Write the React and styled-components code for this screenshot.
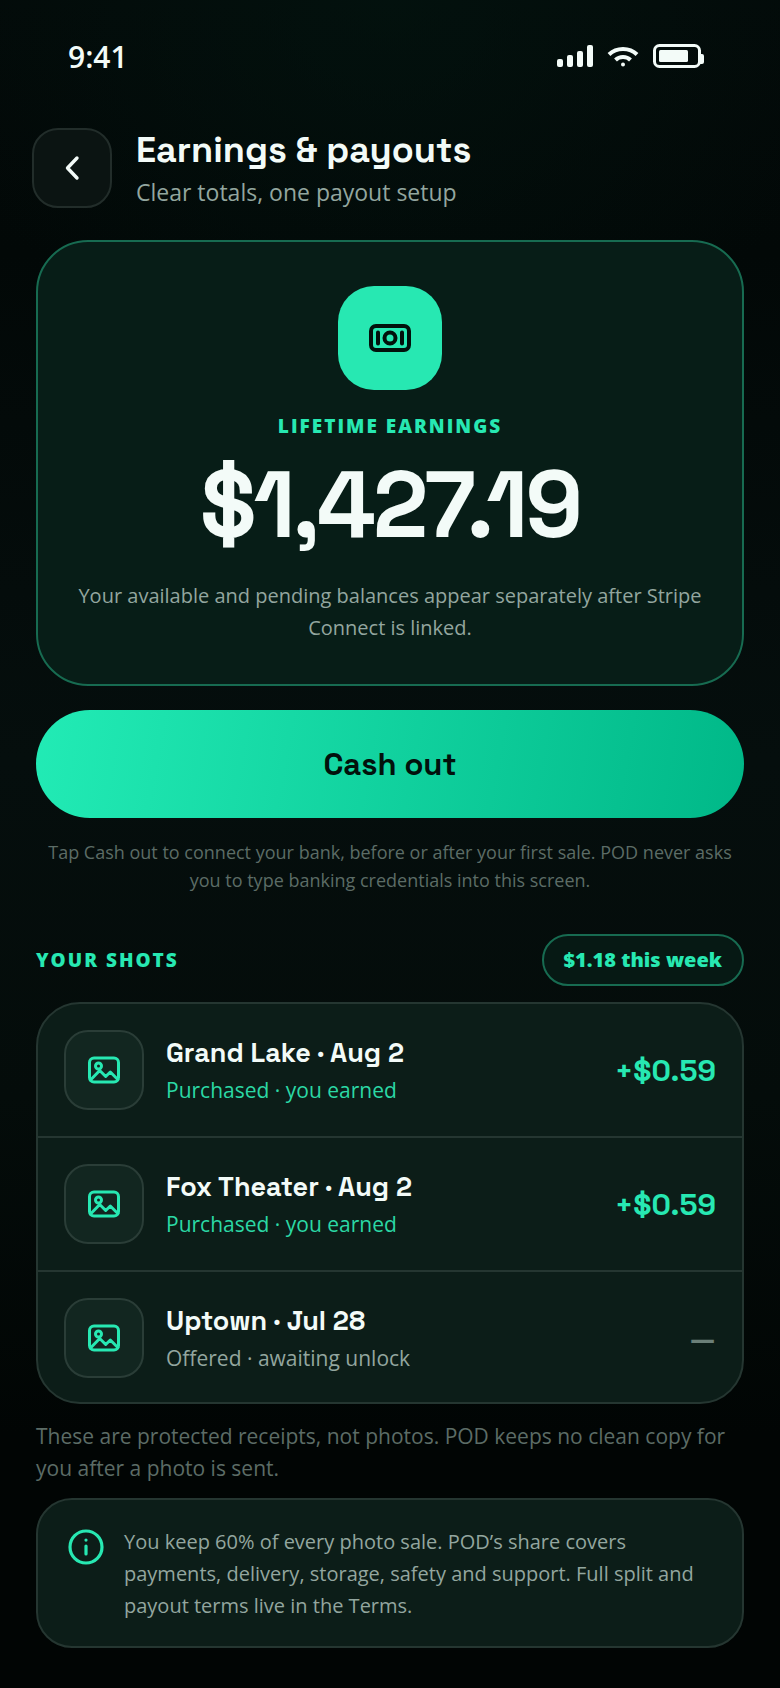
import React from 'react';
import styled, { createGlobalStyle } from 'styled-components';

const display = "'Space Grotesk', Inter, 'Liberation Sans', sans-serif";
const body = "'Segoe UI', 'Open Sans', 'Noto Sans', sans-serif";

const GlobalStyle = createGlobalStyle`
    * {
        box-sizing: border-box;
    }
    body {
        margin: 0;
        background-color: #010504;
        color: #f3fbf8;
        font-family: ${body};
    }
    h1, h2, h3, p, ul {
        margin: 0;
        padding: 0;
    }
`;

const Screen = styled.div`
    min-height: 100vh;
    padding: 0 36px 40px;
    display: flex;
    flex-direction: column;
    background:
        radial-gradient(ellipse 60% 400px at 50% 0, rgba(3, 24, 18, 0.5), transparent),
        linear-gradient(180deg, #030a09 0%, #020807 15%, #050e0d 45%, #040c0a 65%, #010504 85%, #010504 100%);
`;

const StatusBar = styled.div`
    display: flex;
    align-items: center;
    justify-content: space-between;
    height: 112px;
    padding: 0 40px 0 32px;
`;

const Time = styled.span`
    font-size: 30px;
    font-weight: 600;
`;

const StatusIcons = styled.div`
    display: flex;
    align-items: center;
    gap: 14px;
`;

const Header = styled.header`
    display: flex;
    align-items: center;
    gap: 24px;
    height: 80px;
    margin: 16px 0 32px -4px;
`;

const BackButton = styled.button`
    display: grid;
    place-items: center;
    width: 80px;
    height: 80px;
    padding: 0;
    border: 2px solid #222d2a;
    border-radius: 26px;
    background-color: #0b1412;
    color: #f3fbf8;
`;

const Title = styled.h1`
    font-family: ${display};
    font-size: 36px;
    line-height: 48px;
    font-weight: 700;
`;

const Subtitle = styled.p`
    font-size: 23px;
    line-height: 36px;
    color: #93a69f;
`;

const BalanceCard = styled.section`
    display: flex;
    flex-direction: column;
    align-items: center;
    padding: 44px 32px 40px;
    border: 2px solid #176b51;
    border-radius: 52px;
    background-color: #071d17;
    text-align: center;
`;

const CashTile = styled.div`
    display: grid;
    place-items: center;
    width: 104px;
    height: 104px;
    border-radius: 36px;
    background-color: #27e8b2;
    color: #02110c;
`;

const Label = styled.h2`
    font-size: 19px;
    line-height: 24px;
    font-weight: 800;
    letter-spacing: 2px;
    text-transform: uppercase;
    color: #27e8b2;
`;

const CardLabel = styled(Label)`
    margin-top: 24px;
`;

const Total = styled.p`
    margin-top: 16px;
    font-family: ${display};
    font-size: 93px;
    line-height: 102px;
    font-weight: 700;
    letter-spacing: -3px;
`;

const CardNote = styled.p`
    margin-top: 24px;
    font-size: 20px;
    line-height: 32px;
    color: #93a69f;
`;

const CashOutButton = styled.button`
    height: 108px;
    margin-top: 24px;
    border: 0;
    border-radius: 54px;
    background: linear-gradient(100deg, #22ebb5, #00b888);
    color: #02110c;
    font-family: ${display};
    font-size: 31px;
    font-weight: 700;
`;

const Hint = styled.p`
    margin-top: 20px;
    font-size: 18px;
    line-height: 28px;
    text-align: center;
    color: #5c6c66;
`;

const ShotsHeader = styled.div`
    display: flex;
    align-items: center;
    justify-content: space-between;
    margin: 40px 0 16px;
`;

const WeekPill = styled.span`
    padding: 0 20px;
    border: 2px solid #176b51;
    border-radius: 26px;
    background-color: #061914;
    color: #27e8b2;
    font-size: 20px;
    line-height: 48px;
    font-weight: 800;
`;

const ShotList = styled.ul`
    border: 2px solid #253631;
    border-radius: 44px;
    background-color: #0c1d18;
    list-style: none;
`;

const ShotRow = styled.li`
    display: flex;
    align-items: center;
    gap: 22px;
    padding: 26px;
    border-bottom: 2px solid #253631;

    &:last-child {
        padding-bottom: 24px;
        border-bottom: 0;
    }
`;

const ShotTile = styled.div`
    display: grid;
    place-items: center;
    flex: none;
    width: 80px;
    height: 80px;
    border: 2px solid #2a3d37;
    border-radius: 24px;
    background-color: #122620;
    color: #27e8b2;
`;

const ShotText = styled.div`
    flex: 1;
    min-width: 0;
`;

const ShotTitle = styled.h3`
    font-family: ${display};
    font-size: 27px;
    line-height: 40px;
    font-weight: 700;
`;

const ShotStatus = styled.p`
    font-size: 21px;
    line-height: 34px;
    color: ${({ $earned }) => ($earned ? '#2bd8a5' : '#93a69f')};
`;

const Amount = styled.span`
    font-family: ${display};
    font-size: 30px;
    font-weight: 700;
    color: ${({ $earned }) => ($earned ? '#27e8b2' : '#6b7f78')};
`;

const Footnote = styled.p`
    margin-top: 16px;
    font-size: 21px;
    line-height: 32px;
    color: #5c6c66;
`;

const InfoCard = styled.aside`
    display: flex;
    gap: 20px;
    margin-top: 14px;
    padding: 26px 30px 24px;
    border: 2px solid #253631;
    border-radius: 36px;
    background-color: #0c1d18;
    color: #93a69f;
    font-size: 20px;
    line-height: 32px;

    svg {
        flex: none;
        margin-top: 3px;
    }
`;

const shots = [
    { title: 'Grand Lake · Aug 2', status: 'Purchased · you earned', amount: '+$0.59', earned: true },
    { title: 'Fox Theater · Aug 2', status: 'Purchased · you earned', amount: '+$0.59', earned: true },
    { title: 'Uptown · Jul 28', status: 'Offered · awaiting unlock', amount: '—', earned: false },
];

const SignalIcon = () => (
    <svg width="36" height="22" viewBox="0 0 36 22" fill="currentColor" aria-hidden="true">
        <rect x="0" y="14" width="6" height="8" rx="2" />
        <rect x="10" y="10" width="6" height="12" rx="2" />
        <rect x="20" y="6" width="6" height="16" rx="2" />
        <rect x="30" y="0" width="6" height="22" rx="2" />
    </svg>
);

const WifiIcon = () => (
    <svg width="32" height="22" viewBox="0 0 32 22" fill="none" stroke="currentColor" strokeWidth="4" aria-hidden="true">
        <path d="M2 9.5C9.5 2.2 22.5 2.2 30 9.5" />
        <path d="M8.5 15C12.5 11 19.5 11 23.5 15" />
        <circle cx="16" cy="19.5" r="2" fill="currentColor" stroke="none" />
    </svg>
);

const BatteryIcon = () => (
    <svg width="51" height="24" viewBox="0 0 51 24" fill="none" aria-hidden="true">
        <rect x="1.5" y="1.5" width="45" height="21" rx="5" stroke="currentColor" strokeWidth="3" />
        <rect x="6" y="6" width="29" height="12" rx="1.5" fill="currentColor" />
        <path d="M47 10h2a2 2 0 0 1 2 2v6a2 2 0 0 1-2 2h-2z" fill="currentColor" />
    </svg>
);

const BackIcon = () => (
    <svg width="40" height="40" viewBox="0 0 40 40" fill="none" stroke="currentColor" strokeWidth="3.4" strokeLinecap="round" strokeLinejoin="round" aria-hidden="true">
        <path d="M25 10L15.5 20l9.5 10" />
    </svg>
);

const CashIcon = () => (
    <svg width="42" height="28" viewBox="0 0 42 28" fill="none" stroke="currentColor" strokeWidth="4" strokeLinecap="round" aria-hidden="true">
        <rect x="2" y="2" width="38" height="24" rx="5" />
        <circle cx="21" cy="14" r="5.5" />
        <path d="M9 8.5v11M33 8.5v11" />
    </svg>
);

const PhotoIcon = () => (
    <svg width="32" height="28" viewBox="0 0 32 28" fill="none" stroke="currentColor" strokeWidth="3" strokeLinecap="round" strokeLinejoin="round" aria-hidden="true">
        <rect x="1.5" y="2" width="29" height="24" rx="4.5" />
        <circle cx="10.5" cy="10" r="3" />
        <path d="M2.5 24L11.7 14.5l6 6 4.6-4.5 7.5 7.5" />
    </svg>
);

const InfoIcon = () => (
    <svg width="36" height="36" viewBox="0 0 36 36" fill="none" stroke="#27e8b2" strokeWidth="3.2" strokeLinecap="round" aria-hidden="true">
        <circle cx="18" cy="18" r="16" />
        <path d="M18 17v8M18 11v.1" />
    </svg>
);

const Shot = ({ shot }) => (
    <ShotRow>
        <ShotTile><PhotoIcon /></ShotTile>
        <ShotText>
            <ShotTitle>{shot.title}</ShotTitle>
            <ShotStatus $earned={shot.earned}>{shot.status}</ShotStatus>
        </ShotText>
        <Amount $earned={shot.earned}>{shot.amount}</Amount>
    </ShotRow>
);

const App = () => (
    <>
        <GlobalStyle />
        <Screen>
            <StatusBar>
                <Time>9:41</Time>
                <StatusIcons>
                    <SignalIcon />
                    <WifiIcon />
                    <BatteryIcon />
                </StatusIcons>
            </StatusBar>
            <Header>
                <BackButton type="button" aria-label="Back"><BackIcon /></BackButton>
                <div>
                    <Title>Earnings &amp; payouts</Title>
                    <Subtitle>Clear totals, one payout setup</Subtitle>
                </div>
            </Header>
            <BalanceCard>
                <CashTile><CashIcon /></CashTile>
                <CardLabel>Lifetime earnings</CardLabel>
                <Total>$1,427.19</Total>
                <CardNote>Your available and pending balances appear separately after Stripe Connect is linked.</CardNote>
            </BalanceCard>
            <CashOutButton type="button">Cash out</CashOutButton>
            <Hint>Tap Cash out to connect your bank, before or after your first sale. POD never asks you to type banking credentials into this screen.</Hint>
            <ShotsHeader>
                <Label>Your shots</Label>
                <WeekPill>$1.18 this week</WeekPill>
            </ShotsHeader>
            <ShotList>
                {shots.map((shot) => (
                    <Shot key={shot.title} shot={shot} />
                ))}
            </ShotList>
            <Footnote>These are protected receipts, not photos. POD keeps no clean copy for you after a photo is sent.</Footnote>
            <InfoCard>
                <InfoIcon />
                <p>You keep 60% of every photo sale. POD’s share covers payments, delivery, storage, safety and support. Full split and payout terms live in the Terms.</p>
            </InfoCard>
        </Screen>
    </>
);

export default App;
